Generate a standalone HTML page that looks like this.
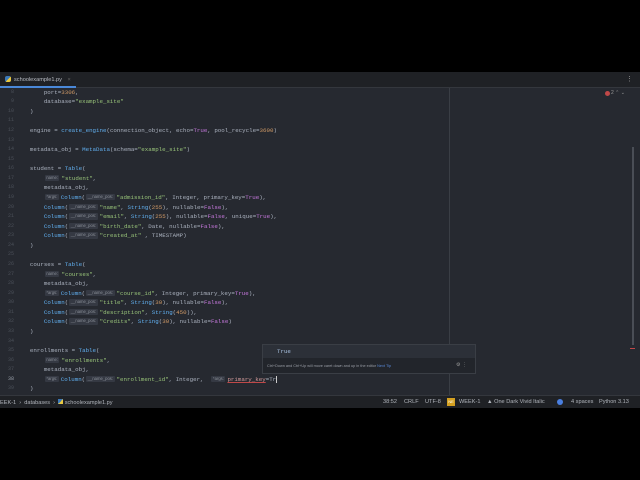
<!DOCTYPE html>
<html><head><meta charset="utf-8">
<style>
*{margin:0;padding:0;box-sizing:border-box}
html,body{width:640px;height:480px;background:#000;overflow:hidden;font-family:"Liberation Sans",sans-serif}
#ide{position:absolute;left:0;top:72px;width:640px;height:336px;background:#262930}
#tabs{position:absolute;left:0;top:0;width:640px;height:16px;background:#1f2125;border-bottom:1px solid #34373d}
#tab{position:absolute;left:0;top:0;width:76px;height:16px;border-bottom:2px solid #4a88d8;font-size:5.6px;color:#b8bcc4;padding:5px 0 0 14px}
.code{position:absolute;left:0;font-family:"Liberation Mono",monospace;font-size:5.8px;color:#abb2bf;white-space:pre;height:9.57px;line-height:9.57px}
.ln{position:absolute;left:0;width:14px;text-align:right;font-family:"Liberation Mono",monospace;font-size:5px;color:#4b5059;height:9.57px;line-height:9.57px}
.s{color:#98c379}.k{color:#c678dd}.f{color:#61afef}.n{color:#d19a66}
.h{display:inline-block;background:#353943;color:#8a8f98;font-family:"Liberation Sans",sans-serif;font-size:4.2px;padding:0 1.5px;line-height:6.5px;border-radius:1px;vertical-align:1px;margin:0 2px 0 1px}
#status{position:absolute;left:0;top:323px;width:640px;height:13px;background:#1f2125;border-top:1px solid #34373d;font-size:5.6px;color:#b0b4bb}
#status span{position:absolute;top:3px}
#popup{position:absolute;left:262px;top:272px;width:214px;height:30px;background:#22252b;border:1px solid #3a3e45}
</style></head><body>
<div id="ide">
<div id="tabs"><div id="tab"><span style="position:absolute;left:5px;top:4px;width:6px;height:6px;background:linear-gradient(135deg,#3b78b8 50%,#e8c840 50%);border-radius:2px"></span>schoolexample1.py <span style="color:#666;margin-left:4px">×</span></div>
<span style="position:absolute;left:626px;top:3px;color:#999;font-size:7px">⋮</span></div>
<div style="position:absolute;left:449px;top:16px;width:1px;height:307px;background:#3a3e45"></div>
<div style="position:absolute;left:632px;top:75px;width:2px;height:198px;background:#4a4e56"></div>
<div style="position:absolute;left:630px;top:276px;width:5px;height:1px;background:#c04848"></div>
<div style="position:absolute;left:605px;top:19px;width:5px;height:5px;border-radius:50%;background:#c04848"></div>
<span style="position:absolute;left:611px;top:18px;font-size:5px;color:#999">2 ⌃ ⌄</span>
<div id="code"></div>
<div id="popup">
<div style="position:absolute;left:0;top:0;width:212px;height:13px;background:#2c3038"></div>
<span style="position:absolute;left:14px;top:3px;font-family:'Liberation Mono',monospace;font-size:5.8px;color:#a8c0e0">True</span>
<span style="position:absolute;left:4px;top:19px;font-size:3.8px;color:#9a9ea6">Ctrl+Down and Ctrl+Up will move caret down and up in the editor <span style="color:#5a8ad8">Next Tip</span></span>
<span style="position:absolute;left:193px;top:17px;font-size:5px;color:#999">⚙ ⋮</span>
</div>
<div id="status">
<span style="left:0">EEK-1 &nbsp;›&nbsp; databases &nbsp;›&nbsp; <span style="position:static;display:inline-block;width:5px;height:5px;background:linear-gradient(135deg,#3b78b8 50%,#e8c840 50%)"></span> schoolexample1.py</span>
<span style="left:383px">38:52</span><span style="left:404px">CRLF</span><span style="left:425px">UTF-8</span>
<span style="left:447px;top:2px;width:8px;height:8px;background:#d4a020;color:#fff;font-size:4px;text-align:center;line-height:8px">NE</span>
<span style="left:459px">WEEK-1</span><span style="left:487px">▲ One Dark Vivid Italic</span>
<span style="left:557px;top:3px;width:6px;height:6px;border-radius:50%;background:#4a7fe0"></span>
<span style="left:571px">4 spaces</span><span style="left:599px">Python 3.13</span>
</div>
</div>
<script>
var L={
8:'        port=<span class="n">3306</span>,',
9:'        database=<span class="s">"example_site"</span>',
10:'    )',
11:'',
12:'    engine = <span class="f">create_engine</span>(connection_object, echo=<span class="k">True</span>, pool_recycle=<span class="n">3600</span>)',
13:'',
14:'    metadata_obj = <span class="f">MetaData</span>(schema=<span class="s">"example_site"</span>)',
15:'',
16:'    student = <span class="f">Table</span>(',
17:'        <span class="h">name:</span><span class="s">"student"</span>,',
18:'        metadata_obj,',
19:'        <span class="h">*args:</span><span class="f">Column</span>(<span class="h">__name_pos:</span><span class="s">"admission_id"</span>, Integer, primary_key=<span class="k">True</span>),',
20:'        <span class="f">Column</span>(<span class="h">__name_pos:</span><span class="s">"name"</span>, <span class="f">String</span>(<span class="n">255</span>), nullable=<span class="k">False</span>),',
21:'        <span class="f">Column</span>(<span class="h">__name_pos:</span><span class="s">"email"</span>, <span class="f">String</span>(<span class="n">255</span>), nullable=<span class="k">False</span>, unique=<span class="k">True</span>),',
22:'        <span class="f">Column</span>(<span class="h">__name_pos:</span><span class="s">"birth_date"</span>, Date, nullable=<span class="k">False</span>),',
23:'        <span class="f">Column</span>(<span class="h">__name_pos:</span><span class="s">"created_at"</span> , TIMESTAMP)',
24:'    )',
25:'',
26:'    courses = <span class="f">Table</span>(',
27:'        <span class="h">name:</span><span class="s">"courses"</span>,',
28:'        metadata_obj,',
29:'        <span class="h">*args:</span><span class="f">Column</span>(<span class="h">__name_pos:</span><span class="s">"course_id"</span>, Integer, primary_key=<span class="k">True</span>),',
30:'        <span class="f">Column</span>(<span class="h">__name_pos:</span><span class="s">"title"</span>, <span class="f">String</span>(<span class="n">30</span>), nullable=<span class="k">False</span>),',
31:'        <span class="f">Column</span>(<span class="h">__name_pos:</span><span class="s">"description"</span>, <span class="f">String</span>(<span class="n">450</span>)),',
32:'        <span class="f">Column</span>(<span class="h">__name_pos:</span><span class="s">"Credits"</span>, <span class="f">String</span>(<span class="n">30</span>), nullable=<span class="k">False</span>)',
33:'    )',
34:'',
35:'    enrollments = <span class="f">Table</span>(',
36:'        <span class="h">name:</span><span class="s">"enrollments"</span>,',
37:'        metadata_obj,',
38:'        <span class="h">*args:</span><span class="f">Column</span>(<span class="h">__name_pos:</span><span class="s">"enrollment_id"</span>, Integer,  <span class="h">*args:</span><span style="color:#d19a9a;text-decoration:underline;text-decoration-color:#c04848">primary_key</span>=Tr<span style="border-left:1px solid #ccc"></span>',
39:'    )'};
var h='';
for(var n=8;n<=39;n++){var t=16+(n-8)*9.57-0.3;
h+='<div class="ln" style="top:'+t+'px;'+(n==38?'color:#9aa0aa':'')+'">'+n+'</div>';
h+='<div class="code" style="left:16px;top:'+t+'px">'+L[n]+'</div>';}
document.getElementById('code').innerHTML=h;
</script>
</body></html>
